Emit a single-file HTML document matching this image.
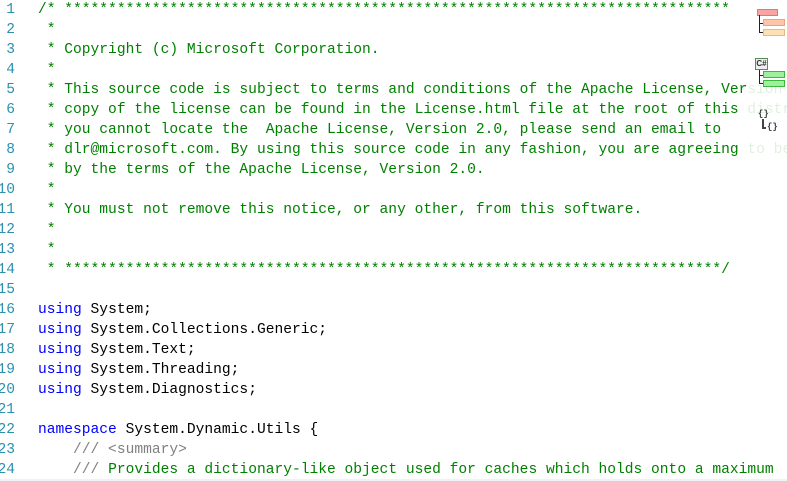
<!DOCTYPE html>
<html><head><style>
html,body{margin:0;padding:0;background:#fff;width:787px;height:481px;overflow:hidden;position:relative}
.wrap{position:absolute;left:0;top:0;width:787px;height:481px;overflow:hidden}
.ln{position:absolute;left:-6px;top:0;width:21px;text-align:right;color:#2b91af;font:14.6px/20px "Liberation Mono",monospace}
.code{position:absolute;left:38px;top:0;white-space:pre;font:14.6px/20px "Liberation Mono",monospace;color:#000}
.c{color:#008000}.k{color:#0000ff}.g{color:#808080}
.fade{position:absolute;left:748px;top:0;width:39px;height:200px;background:rgba(255,255,255,.88)}
.r{position:absolute;box-sizing:border-box}
</style></head><body><div class="wrap">
<div class="ln">1<br>2<br>3<br>4<br>5<br>6<br>7<br>8<br>9<br>10<br>11<br>12<br>13<br>14<br>15<br>16<br>17<br>18<br>19<br>20<br>21<br>22<br>23<br>24</div>
<div class="code"><span class="c">/* ****************************************************************************
 *
 * Copyright (c) Microsoft Corporation. 
 *
 * This source code is subject to terms and conditions of the Apache License, Version 2.0. A 
 * copy of the license can be found in the License.html file at the root of this distribution. If 
 * you cannot locate the  Apache License, Version 2.0, please send an email to 
 * dlr@microsoft.com. By using this source code in any fashion, you are agreeing to be bound 
 * by the terms of the Apache License, Version 2.0.
 *
 * You must not remove this notice, or any other, from this software.
 *
 *
 * ***************************************************************************/</span>

<span class="k">using</span> System;
<span class="k">using</span> System.Collections.Generic;
<span class="k">using</span> System.Text;
<span class="k">using</span> System.Threading;
<span class="k">using</span> System.Diagnostics;

<span class="k">namespace</span> System.Dynamic.Utils {
    <span class="g">/// &lt;summary&gt;</span>
    <span class="g">///</span><span class="c"> Provides a dictionary-like object used for caches which holds onto a maximum</span></div>
<div class="fade"></div>
<div class="r" style="left:757px;top:9px;width:21px;height:7px;background:#f9a3a3;border:1px solid #e87474"></div>
<div class="r" style="left:759px;top:15px;height:18px;border-left:1px solid #222;border-bottom:1px solid #222;width:5px"></div>
<div class="r" style="left:759px;top:23px;width:5px;height:1px;background:#222"></div>
<div class="r" style="left:763px;top:19px;width:22px;height:7px;background:#fdc6a8;border:1px solid #f0a27a"></div>
<div class="r" style="left:763px;top:29px;width:22px;height:7px;background:#fde0b4;border:1px solid #e8bb7a"></div>
<div class="r" style="left:755px;top:58px;width:13px;height:12px;background:#eee;border:1px solid #5a8a5a;font:bold 8px/10px 'Liberation Sans',sans-serif;color:#333;text-align:center">C#</div>
<div class="r" style="left:759px;top:70px;width:5px;height:14px;border-left:1px solid #222;border-bottom:1px solid #222"></div>
<div class="r" style="left:759px;top:75px;width:5px;height:1px;background:#222"></div>
<div class="r" style="left:763px;top:71px;width:22px;height:7px;background:#9ef09e;border:1px solid #3cb83c"></div>
<div class="r" style="left:763px;top:80px;width:22px;height:7px;background:#9ef09e;border:1px solid #3cb83c"></div>
<div class="r" style="left:758px;top:109px;font:bold 9px/10px 'Liberation Mono',monospace;color:#444">{}</div>
<div class="r" style="left:762px;top:119px;width:4px;height:10px;border-left:2px solid #444;border-bottom:2px solid #444"></div>
<div class="r" style="left:767px;top:122px;font:bold 9px/10px 'Liberation Mono',monospace;color:#444">{}</div>
<div class="r" style="left:0;top:479px;width:787px;height:2px;background:#eef2f6"></div>
</div></body></html>
